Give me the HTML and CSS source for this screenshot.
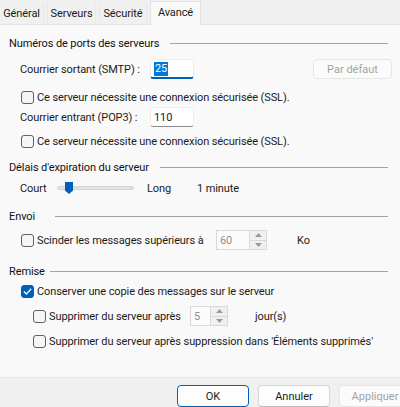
FILE: index.html
```html
<!DOCTYPE html>
<html lang="fr">
<head>
<meta charset="utf-8">
<link rel="stylesheet" href="styles.css">
</head>
<body>
<div class="dialog">
  <div class="tabs">
    <div class="tab t1">Général</div>
    <div class="tab t2">Serveurs</div>
    <div class="tab t3">Sécurité</div>
    <div class="tab t4 active">Avancé</div>
  </div>
  <div class="panel">
    <div class="group-title"><span>Numéros de ports des serveurs</span><i class="rule"></i></div>
    <div class="row port-row r-smtp">
      <span class="port-label">Courrier sortant (SMTP) :</span>
      <div class="field focused"><span class="sel">25</span></div>
      <button class="btn disabled default-btn">Par défaut</button>
    </div>
    <div class="row check-row r-ssl1">
      <span class="cb"></span><span>Ce serveur nécessite une connexion sécurisée (SSL).</span>
    </div>
    <div class="row port-row r-pop">
      <span class="port-label">Courrier entrant (POP3) :</span>
      <div class="field"><span>110</span></div>
    </div>
    <div class="row check-row r-ssl2">
      <span class="cb"></span><span>Ce serveur nécessite une connexion sécurisée (SSL).</span>
    </div>

    <div class="group-title g2"><span>Délais d'expiration du serveur</span><i class="rule"></i></div>
    <div class="row slider-row">
      <span class="s-court">Court</span>
      <div class="slider"><div class="track"></div><div class="thumb"></div></div>
      <span class="s-long">Long</span>
      <span>1 minute</span>
    </div>

    <div class="group-title g3"><span>Envoi</span><i class="rule wide-gap"></i></div>
    <div class="row check-row r-split">
      <div class="check-label split-label"><span class="cb"></span><span>Scinder les messages supérieurs à</span></div>
      <div class="spin spin-60 disabled-spin">
        <span class="spin-val">60</span>
        <div class="spin-btns">
          <span class="arrow up"><svg width="7" height="4" viewBox="0 0 7 4"><path d="M0 4 L3.5 0 L7 4Z" fill="#9a9a9a"/></svg></span>
          <span class="arrow down"><svg width="7" height="4" viewBox="0 0 7 4"><path d="M0 0 L3.5 4 L7 0Z" fill="#9a9a9a"/></svg></span>
        </div>
      </div>
      <span class="unit-ko">Ko</span>
    </div>

    <div class="group-title g4"><span>Remise</span><i class="rule small-gap"></i></div>
    <div class="row check-row r-keep">
      <span class="cb checked"><svg width="11" height="11" viewBox="0 0 11 11"><path d="M2.2 5.8 L4.4 8 L8.8 3.2" fill="none" stroke="#fff" stroke-width="1.3" stroke-linecap="round" stroke-linejoin="round"/></svg></span><span>Conserver une copie des messages sur le serveur</span>
    </div>
    <div class="row check-row sub r-days">
      <div class="check-label days-label"><span class="cb"></span><span>Supprimer du serveur après</span></div>
      <div class="spin spin-5 disabled-spin">
        <span class="spin-val">5</span>
        <div class="spin-btns">
          <span class="arrow up"><svg width="7" height="4" viewBox="0 0 7 4"><path d="M0 4 L3.5 0 L7 4Z" fill="#9a9a9a"/></svg></span>
          <span class="arrow down"><svg width="7" height="4" viewBox="0 0 7 4"><path d="M0 0 L3.5 4 L7 0Z" fill="#9a9a9a"/></svg></span>
        </div>
      </div>
      <span class="unit-days">jour(s)</span>
    </div>
    <div class="row check-row sub r-del">
      <span class="cb"></span><span>Supprimer du serveur après suppression dans 'Éléments supprimés'</span>
    </div>
  </div>
  <div class="footer">
    <button class="btn fbtn ok">OK</button>
    <button class="btn fbtn">Annuler</button>
    <button class="btn fbtn disabled">Appliquer</button>
  </div>
</div>
</body>
</html>
```

FILE: styles.css
```css
* { box-sizing: border-box; }
html, body { margin: 0; padding: 0; }
body {
  width: 400px;
  height: 407px;
  overflow: hidden;
  font-family: Roboto, "Liberation Sans", Arial, sans-serif;
  font-size: 11px;
  letter-spacing: -0.1px;
  color: #1b1b1b;
  background: #f0f0f0;
}
.dialog { display: flex; flex-direction: column; height: 407px; }

.tabs {
  display: flex;
  align-items: flex-end;
  height: 25px;
  gap: 3px;
  margin-left: -1px;
  border-bottom: 1px solid #e3e3e3;
  background: #f0f0f0;
}
.tab {
  height: 21px;
  display: flex;
  align-items: center;
  justify-content: center;
  background: #f0f0f0;
  color: #1b1b1b;
  border-left: 1px solid #e8e8e8;
  border-right: 1px solid #e8e8e8;
}
.t1 { width: 45px; }
.t2 { width: 49px; }
.t3 { width: 48px; }
.t4 { width: 51px; }
.tab.active {
  height: 24px;
  margin-bottom: -1px;
  padding-bottom: 3px;
  background: #f9f9f9;
  border: 1px solid #e3e3e3;
  border-bottom: none;
}

.panel {
  flex: 1;
  background: #f9f9f9;
  padding-top: 10px;
  display: flex;
  flex-direction: column;
}
.group-title {
  display: flex;
  align-items: center;
  height: 16px;
  padding-left: 9px;
  padding-right: 12px;
  color: #111;
}
.rule {
  flex: 1;
  height: 1px;
  background: #a3a3a3;
  margin-left: 11px;
}
.rule.wide-gap { margin-left: 20px; }
.rule.small-gap { margin-left: 5px; }
.g2 { margin-top: 9px; }
.g3 { margin-top: 11px; }
.g4 { margin-top: 13px; }

.row { display: flex; align-items: center; }
.port-row { height: 20px; padding-left: 20px; }
.r-smtp { margin-top: 8px; }
.r-pop { margin-top: 1px; }
.port-label { width: 130px; }
.field {
  width: 44px;
  height: 20px;
  background: #fff;
  border: 1px solid #ececec;
  border-bottom: 1px solid #8d8d8d;
  border-radius: 3px;
  padding-left: 3px;
  display: flex;
  align-items: center;
}
.field.focused { border-bottom: 2px solid #005fb8; padding-top: 1px; }
.sel { background: #0078d7; color: #fff; padding: 0 1px; line-height: 14px; }

.btn {
  font: inherit;
  height: 20px;
  background: #fdfdfd;
  border: 1px solid #d6d6d6;
  border-bottom-color: #bdbdbd;
  border-radius: 4px;
  color: #1b1b1b;
  padding: 0;
}
.btn.disabled {
  background: #fbfbfb;
  border-color: #e6e6e6;
  color: #a3a3a3;
}
.default-btn { width: 79px; margin-left: auto; margin-right: 8px; }

.check-row { height: 18px; padding-left: 21px; }
.check-row.sub { padding-left: 33px; }
.r-ssl1 { margin-top: 9px; }
.r-ssl2 { margin-top: 5px; }
.r-split { height: 20px; margin-top: 6px; }
.r-keep { margin-top: 3px; }
.r-days { height: 20px; margin-top: 6px; }
.r-del { margin-top: 6px; }
.check-label { display: flex; align-items: center; }
.split-label { width: 195px; }
.days-label { width: 157px; }

.cb {
  width: 13px;
  height: 13px;
  flex: none;
  border: 1px solid #616161;
  border-radius: 3px;
  background: #f5f5f5;
  margin-right: 3px;
  display: flex;
  align-items: center;
  justify-content: center;
}
.cb.checked { background: #005fb8; border-color: #005fb8; }

.slider-row { height: 18px; padding-left: 20px; margin-top: 4px; }
.s-court { width: 37px; }
.slider { position: relative; width: 77px; height: 18px; display: flex; align-items: center; }
.track { width: 100%; height: 4px; background: #e3e3e3; border: 1px solid #d6d6d6; border-radius: 2px; }
.thumb {
  position: absolute;
  left: 8px;
  top: 3px;
  width: 8px;
  height: 12px;
  background: #005fb8;
  clip-path: polygon(0 0, 100% 0, 100% 70%, 50% 100%, 0 70%);
}
.s-long { width: 50px; margin-left: 13px; }

.spin {
  height: 20px;
  display: flex;
  align-items: stretch;
  border: 1px solid #d9d9d9;
  background: #fbfbfb;
  color: #8f8f8f;
}
.spin-60 { width: 51px; }
.spin-5 { width: 38px; }
.spin-val { flex: 1; display: flex; align-items: center; padding-left: 3px; }
.spin-btns {
  width: 17px;
  display: flex;
  flex-direction: column;
  border-left: 1px solid #d9d9d9;
  background: #f0f0f0;
}
.arrow { flex: 1; display: flex; align-items: center; justify-content: center; }
.arrow.up { border-bottom: 1px solid #d9d9d9; }
.unit-ko { margin-left: 30px; }
.unit-days { margin-left: 27px; }

.footer {
  height: 30px;
  border-top: 1px solid #e3e3e3;
  background: #f0f0f0;
  display: flex;
  align-items: flex-start;
  padding-top: 7px;
  padding-left: 177px;
  gap: 9px;
  overflow: hidden;
}
.fbtn { width: 72px; height: 22px; flex: none; }
.fbtn.ok { border: 1px solid #005fb8; box-shadow: inset 0 0 0 1px #fff; }
```
